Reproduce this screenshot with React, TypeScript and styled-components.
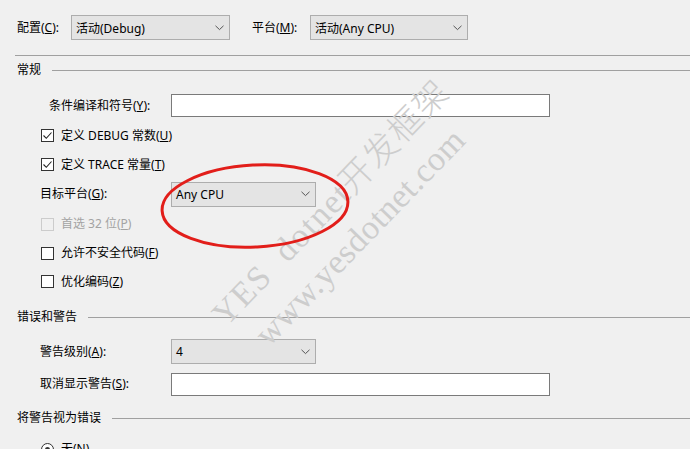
import React from "react";
import styled, { createGlobalStyle } from "styled-components";

const GlobalStyle = createGlobalStyle`
  html, body { margin: 0; padding: 0; background: #f0f0f0; }
  body {
    font-family: "Noto Sans", "Noto Sans CJK SC", sans-serif;
    font-size: 12px;
    color: #000;
  }
`;

const Page = styled.div`
  position: relative;
  width: 690px;
  height: 449px;
  overflow: hidden;
  background: #f0f0f0;
`;

const TopBar = styled.div`
  display: flex;
  align-items: center;
  height: 25px;
  padding: 15px 0 0 17px;
`;

const TopLabel = styled.span<{ $w: number; $ml?: number }>`
  width: ${(p) => p.$w}px;
  margin-left: ${(p) => p.$ml ?? 0}px;
  white-space: nowrap;
  line-height: 16px;
`;

const Dropdown = styled.div<{ $w: number }>`
  box-sizing: border-box;
  width: ${(p) => p.$w}px;
  height: 25px;
  border: 1px solid #adadad;
  background: #e4e4e4;
  display: flex;
  align-items: center;
  justify-content: space-between;
  padding: 0 5px 0 4px;
  white-space: nowrap;
`;

const TextBox = styled.div<{ $w: number }>`
  box-sizing: border-box;
  width: ${(p) => p.$w}px;
  height: 23px;
  border: 1px solid #7a7a7a;
  background: #fff;
`;

const Divider = styled.div`
  height: 1px;
  margin: 15px 0 0 15px;
  background: #a0a0a0;
`;

const SectionHeader = styled.div<{ $mt: number }>`
  display: flex;
  align-items: center;
  gap: 11px;
  height: 16px;
  margin-top: ${(p) => p.$mt}px;
  padding-left: 17px;
`;

const SectionTitle = styled.span`
  white-space: nowrap;
  line-height: 16px;
`;

const SectionLine = styled.div`
  flex: 1;
  height: 1px;
  background: #a0a0a0;
`;

const Group = styled.div<{ $mt: number }>`
  display: flex;
  flex-direction: column;
  margin-top: ${(p) => p.$mt}px;
`;

const Row = styled.div<{ $h: number }>`
  display: flex;
  align-items: center;
  height: ${(p) => p.$h}px;
  padding-left: 40px;
`;

const FieldLabel = styled.span<{ $indent?: number }>`
  box-sizing: border-box;
  width: 131px;
  padding-left: ${(p) => p.$indent ?? 0}px;
  white-space: nowrap;
  line-height: 16px;
`;

const CheckLabel = styled.label<{ $disabled?: boolean }>`
  display: flex;
  align-items: center;
  gap: 7px;
  padding-left: 1px;
  color: ${(p) => (p.$disabled ? "#a3a3a3" : "#000")};
  white-space: nowrap;
  line-height: 16px;
`;

const Box = styled.span<{ $disabled?: boolean }>`
  box-sizing: border-box;
  width: 13px;
  height: 13px;
  border: 1px solid ${(p) => (p.$disabled ? "#cccccc" : "#333333")};
  background: ${(p) => (p.$disabled ? "#f0f0f0" : "#ffffff")};
  display: flex;
  align-items: center;
  justify-content: center;
`;

const RadioCircle = styled.span`
  box-sizing: border-box;
  width: 13px;
  height: 13px;
  border: 1px solid #333;
  border-radius: 50%;
  background: #fff;
  display: flex;
  align-items: center;
  justify-content: center;
  &::after {
    content: "";
    width: 5px;
    height: 5px;
    border-radius: 50%;
    background: #333;
  }
`;

const Watermark = styled.div<{ $x: number; $y: number; $ls: number }>`
  position: absolute;
  left: ${(p) => p.$x}px;
  top: ${(p) => p.$y}px;
  transform: translate(-50%, -50%) rotate(-46deg);
  font-family: "Liberation Serif", "Noto Sans CJK SC", serif;
  font-size: 34px;
  font-weight: 300;
  letter-spacing: ${(p) => p.$ls}px;
  color: #cdcdcd;
  white-space: pre;
  pointer-events: none;
  line-height: 1;
`;

const Circle = styled.svg`
  position: absolute;
  left: 158px;
  top: 161px;
  overflow: visible;
  pointer-events: none;
`;

const Chevron = () => (
  <svg width="9" height="6" viewBox="0 0 9 6">
    <path d="M0.5 0.8 L4.5 4.6 L8.5 0.8" fill="none" stroke="#555" strokeWidth="1" />
  </svg>
);

const Check = () => (
  <svg width="11" height="11" viewBox="0 0 11 11">
    <path d="M1.5 5.5 L4.3 8.3 L9.5 2.5" fill="none" stroke="#222" strokeWidth="1.1" />
  </svg>
);

const M = ({ t }: { t: string }) => <u>{t}</u>;

const Select = ({ w, value }: { w: number; value: string }) => (
  <Dropdown $w={w}>
    <span>{value}</span>
    <Chevron />
  </Dropdown>
);

const CheckItem = ({
  checked,
  disabled,
  children,
}: {
  checked?: boolean;
  disabled?: boolean;
  children: React.ReactNode;
}) => (
  <CheckLabel $disabled={disabled}>
    <Box $disabled={disabled}>{checked && <Check />}</Box>
    <span>{children}</span>
  </CheckLabel>
);

export default function App() {
  return (
    <Page>
      <GlobalStyle />
      <TopBar>
        <TopLabel $w={54}>
          配置(<M t="C" />):
        </TopLabel>
        <Select w={159} value="活动(Debug)" />
        <TopLabel $w={58} $ml={22}>
          平台(<M t="M" />):
        </TopLabel>
        <Select w={158} value="活动(Any CPU)" />
      </TopBar>
      <Divider />

      <SectionHeader $mt={6}>
        <SectionTitle>常规</SectionTitle>
        <SectionLine />
      </SectionHeader>
      <Group $mt={12}>
        <Row $h={31}>
          <FieldLabel $indent={9}>
            条件编译和符号(<M t="Y" />):
          </FieldLabel>
          <TextBox $w={379} />
        </Row>
        <Row $h={29}>
          <CheckItem checked>
            定义 DEBUG 常数(<M t="U" />)
          </CheckItem>
        </Row>
        <Row $h={29}>
          <CheckItem checked>
            定义 TRACE 常量(<M t="T" />)
          </CheckItem>
        </Row>
        <Row $h={30}>
          <FieldLabel>
            目标平台(<M t="G" />):
          </FieldLabel>
          <Select w={145} value="Any CPU" />
        </Row>
        <Row $h={30}>
          <CheckItem disabled>
            首选 32 位(<M t="P" />)
          </CheckItem>
        </Row>
        <Row $h={28}>
          <CheckItem>
            允许不安全代码(<M t="F" />)
          </CheckItem>
        </Row>
        <Row $h={29}>
          <CheckItem>
            优化编码(<M t="Z" />)
          </CheckItem>
        </Row>
      </Group>

      <SectionHeader $mt={13}>
        <SectionTitle>错误和警告</SectionTitle>
        <SectionLine />
      </SectionHeader>
      <Group $mt={10}>
        <Row $h={33}>
          <FieldLabel>
            警告级别(<M t="A" />):
          </FieldLabel>
          <Select w={145} value="4" />
        </Row>
        <Row $h={32}>
          <FieldLabel>
            取消显示警告(<M t="S" />):
          </FieldLabel>
          <TextBox $w={379} />
        </Row>
      </Group>

      <SectionHeader $mt={10}>
        <SectionTitle>将警告视为错误</SectionTitle>
        <SectionLine />
      </SectionHeader>
      <Group $mt={9}>
        <Row $h={28}>
          <CheckLabel>
            <RadioCircle />
            <span>
              无(<M t="N" />)
            </span>
          </CheckLabel>
        </Row>
      </Group>

      <Watermark $x={331} $y={203} $ls={1.5}>{"YES  dotnet开发框架"}</Watermark>
      <Watermark $x={360} $y={237} $ls={0.5}>{"www.yesdotnet.com"}</Watermark>

      <Circle width="194" height="90" viewBox="0 0 194 90">
        <ellipse
          cx="97"
          cy="45"
          rx="93"
          ry="41"
          fill="none"
          stroke="#e21e1a"
          strokeWidth="3"
          transform="rotate(-3 97 45)"
        />
      </Circle>
    </Page>
  );
}
